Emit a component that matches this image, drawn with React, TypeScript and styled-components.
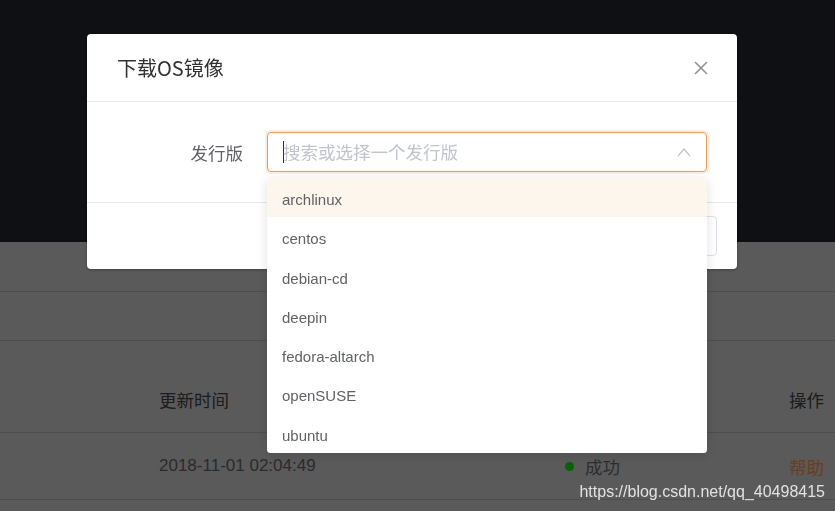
import React from 'react';
import styled, { createGlobalStyle } from 'styled-components';

const GlobalStyle = createGlobalStyle`
  html, body {
    margin: 0;
    padding: 0;
    width: 835px;
    height: 511px;
    overflow: hidden;
    font-family: "Liberation Sans", "Noto Sans CJK SC", sans-serif;
  }
  * {
    box-sizing: border-box;
  }
`;

const Page = styled.div`
  display: flex;
  flex-direction: column;
  width: 835px;
  height: 511px;
  background: #b4b4b4;
`;

const TopBar = styled.div`
  height: 242px;
  background: #1e2028;
`;

const ToolRow = styled.div<{ $h: number }>`
  height: ${({ $h }) => $h}px;
  border-bottom: 1px solid #9c9c9c;
`;

const TableRow = styled.div<{ $h: number; $top?: number }>`
  display: grid;
  grid-template-columns: 159px 406px 1fr auto;
  align-items: center;
  height: ${({ $h }) => $h}px;
  padding: ${({ $top = 0 }) => $top}px 11px 0 0;
  border-bottom: 1px solid #9c9c9c;
  font-size: 17.5px;
`;

const HeadCell = styled.div`
  color: #383838;
  font-family: "Noto Sans CJK SC", sans-serif;
`;

const Cell = styled.div`
  color: #565656;
  font-size: 17px;
`;

const Status = styled.div`
  display: flex;
  align-items: center;
  gap: 11px;
  color: #5a5a66;
  font-family: "Noto Sans CJK SC", sans-serif;
`;

const Dot = styled.span`
  width: 9px;
  height: 9px;
  border-radius: 50%;
  background: #10c010;
`;

const LinkCell = styled.div`
  color: #d67a3e;
  font-family: "Noto Sans CJK SC", sans-serif;
`;

const Mask = styled.div`
  position: fixed;
  inset: 0;
  background: rgba(0, 0, 0, 0.5);
`;

const DialogLayer = styled.div`
  position: fixed;
  inset: 0;
  padding: 34px 0 0 87px;
`;

const Dialog = styled.div`
  width: 650px;
  background: #fff;
  border-radius: 4px;
  box-shadow: 0 1px 3px rgba(0, 0, 0, 0.3);
`;

const DialogHeader = styled.div`
  display: flex;
  align-items: center;
  justify-content: space-between;
  height: 68px;
  padding: 0 28px 0 30px;
  border-bottom: 1px solid #e6e6e6;
`;

const Title = styled.div`
  font-family: "Noto Sans CJK SC", sans-serif;
  font-size: 20px;
  color: #303133;
`;

const CloseButton = styled.button`
  display: flex;
  border: none;
  background: none;
  padding: 0;
  cursor: pointer;
`;

const DialogBody = styled.div`
  padding: 30px;
`;

const FormRow = styled.div`
  display: flex;
  align-items: center;
`;

const Label = styled.div`
  width: 150px;
  padding-right: 24px;
  text-align: right;
  font-family: "Noto Sans CJK SC", sans-serif;
  font-size: 17.5px;
  color: #606266;
`;

const SelectWrap = styled.div`
  position: relative;
  width: 440px;
`;

const SelectBox = styled.div`
  display: flex;
  align-items: center;
  height: 40px;
  padding: 0 15px;
  border: 1px solid #f09a52;
  border-radius: 4px;
  box-shadow: 0 0 0 2px rgba(240, 154, 82, 0.18);
  background: #fff;
`;

const Caret = styled.span`
  width: 1px;
  height: 22px;
  background: #303133;
`;

const Placeholder = styled.span`
  flex: 1;
  font-family: "Noto Sans CJK SC", sans-serif;
  font-size: 17.5px;
  color: #c0c4cc;
  margin: -2px 0 0 -1px;
`;

const Dropdown = styled.ul`
  position: absolute;
  top: 46px;
  left: 0;
  width: 100%;
  margin: 0;
  padding: 0;
  list-style: none;
  background: #fff;
  border-radius: 4px;
  box-shadow: 0 2px 12px rgba(0, 0, 0, 0.12);
  overflow: hidden;
  z-index: 10;
`;

const Option = styled.li<{ $hover?: boolean }>`
  height: 39.3px;
  line-height: 43px;
  padding: 0 15px;
  overflow: hidden;
  font-family: "Liberation Sans", sans-serif;
  font-size: 15px;
  color: #606266;
  background: ${({ $hover }) => ($hover ? '#fdf6ec' : '#fff')};
`;

const DialogFooter = styled.div`
  display: flex;
  justify-content: flex-end;
  gap: 12px;
  padding: 13px 20px;
  border-top: 1px solid #e6e6e6;
`;

const Button = styled.button<{ $primary?: boolean }>`
  height: 40px;
  padding: 0 22px;
  border-radius: 4px;
  font-family: "Noto Sans CJK SC", sans-serif;
  font-size: 15px;
  border: 1px solid ${({ $primary }) => ($primary ? '#f09a52' : '#dcdfe6')};
  background: ${({ $primary }) => ($primary ? '#f09a52' : '#fff')};
  color: ${({ $primary }) => ($primary ? '#fff' : '#606266')};
`;

const Watermark = styled.div`
  position: fixed;
  right: 10px;
  bottom: 10px;
  font-family: "Liberation Sans", sans-serif;
  font-size: 16px;
  color: rgba(255, 255, 255, 0.82);
`;

const distros = ['archlinux', 'centos', 'debian-cd', 'deepin', 'fedora-altarch', 'openSUSE', 'ubuntu'];

const App: React.FC = () => {
  return (
    <>
      <GlobalStyle />
      <Page>
        <TopBar />
        <ToolRow $h={50} />
        <ToolRow $h={49} />
        <TableRow $h={92} $top={26}>
          <div />
          <HeadCell>更新时间</HeadCell>
          <HeadCell>状态</HeadCell>
          <HeadCell>操作</HeadCell>
        </TableRow>
        <TableRow $h={67}>
          <div />
          <Cell>2018-11-01 02:04:49</Cell>
          <Status>
            <Dot />
            成功
          </Status>
          <LinkCell>帮助</LinkCell>
        </TableRow>
      </Page>
      <Mask />
      <DialogLayer>
        <Dialog>
          <DialogHeader>
            <Title>下载OS镜像</Title>
            <CloseButton aria-label="close">
              <svg width="16" height="16" viewBox="0 0 16 16">
                <path d="M2 2 L14 14 M14 2 L2 14" stroke="#909399" strokeWidth="1.6" fill="none" />
              </svg>
            </CloseButton>
          </DialogHeader>
          <DialogBody>
            <FormRow>
              <Label>发行版</Label>
              <SelectWrap>
                <SelectBox>
                  <Caret />
                  <Placeholder>搜索或选择一个发行版</Placeholder>
                  <svg width="14" height="10" viewBox="0 0 14 10">
                    <polyline points="1,9 7,2 13,9" stroke="#c0c4cc" strokeWidth="1.3" fill="none" />
                  </svg>
                </SelectBox>
                <Dropdown>
                  {distros.map((d, i) => (
                    <Option key={d} $hover={i === 0}>
                      {d}
                    </Option>
                  ))}
                </Dropdown>
              </SelectWrap>
            </FormRow>
          </DialogBody>
          <DialogFooter>
            <Button $primary>确定</Button>
            <Button>取消</Button>
          </DialogFooter>
        </Dialog>
      </DialogLayer>
      <Watermark>https://blog.csdn.net/qq_40498415</Watermark>
    </>
  );
};

export default App;
